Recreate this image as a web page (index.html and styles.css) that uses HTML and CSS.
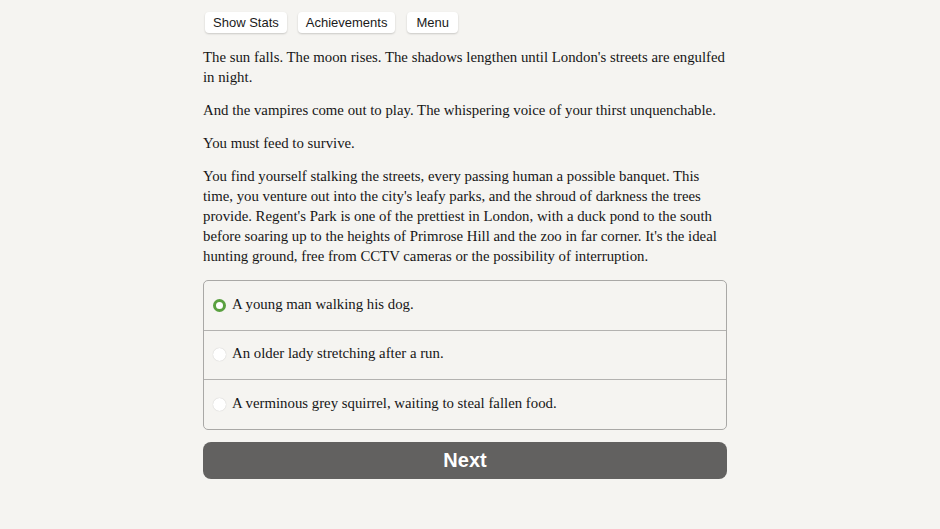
FILE: index.html
```html
<!DOCTYPE html>
<html lang="en">
<head>
  <meta charset="UTF-8">
  <meta name="viewport" content="width=device-width, initial-scale=1.0">
  <title>Regent's Park</title>
  <link rel="stylesheet" href="styles.css">
</head>
<body>
  <div class="container">
    <div class="buttons">
      <button class="spacedLink">Show Stats</button>
      <button class="spacedLink">Achievements</button>
      <button class="spacedLink">Menu</button>
    </div>

    <div class="text">
      <p>The sun falls. The moon rises. The shadows lengthen until London's streets are engulfed in night.</p>
      <p>And the vampires come out to play. The whispering voice of your thirst unquenchable.</p>
      <p>You must feed to survive.</p>
      <p>You find yourself stalking the streets, every passing human a possible banquet. This time, you venture out into the city's leafy parks, and the shroud of darkness the trees provide. Regent's Park is one of the prettiest in London, with a duck pond to the south before soaring up to the heights of Primrose Hill and the zoo in far corner. It's the ideal hunting ground, free from CCTV cameras or the possibility of interruption.</p>
    </div>

    <form class="choice">
      <label class="option">
        <input type="radio" name="choice" checked>
        <span class="radio"></span>
        A young man walking his dog.
      </label>
      <label class="option">
        <input type="radio" name="choice">
        <span class="radio"></span>
        An older lady stretching after a run.
      </label>
      <label class="option">
        <input type="radio" name="choice">
        <span class="radio"></span>
        A verminous grey squirrel, waiting to steal fallen food.
      </label>
    </form>

    <button class="next">Next</button>
  </div>
</body>
</html>
```

FILE: styles.css
```css
* {margin: 0; padding: 0; box-sizing: border-box;}

html, body {
  height: 100%;
}
body {
  background-color: #f5f4f1;
  color: #161616;
  font-family: "Liberation Serif", "Times New Roman", serif;
  padding-right: 10px;
}
.container {
  width: 524px;
  margin: 0 auto;
  padding-top: 12px;
}

/* top bar */
.buttons {
  display: flex;
  gap: 11px;
  padding-left: 2px;
}
.spacedLink {
  font-family: "Liberation Sans", Arial, sans-serif;
  font-size: 13px;
  color: #1a1a1a;
  background-color: #fff;
  border: none;
  border-radius: 4px;
  padding: 0 8px;
  height: 21px;
  line-height: 21px;
  box-shadow: 0 1px 2px rgba(0, 0, 0, 0.18);
}
.spacedLink:last-child {
  padding: 0 9px;
  margin-left: 1px;
}

/* story text */
.text {
  padding-top: 14px;
  font-size: 14.8px;
  line-height: 20px;
}
.text p {
  margin-bottom: 13px;
}

/* choices */
.choice {
  margin-top: 14px;
  border: 1px solid #a9a8a6;
  border-radius: 5px;
  overflow: hidden;
}
.option {
  display: flex;
  align-items: center;
  height: 49.5px;
  padding-left: 9px;
  padding-bottom: 2px;
  font-size: 14.8px;
  border-bottom: 1px solid #b3b2b0;
}
.option:last-child {
  height: 48.5px;
  border-bottom: none;
}
.option input {
  display: none;
}
.radio {
  width: 13px;
  height: 13px;
  border-radius: 50%;
  background-color: #fff;
  box-shadow: 0 0 1px rgba(0, 0, 0, 0.25);
  margin-right: 6px;
  margin-top: 2px;
  flex-shrink: 0;
}
.option input:checked + .radio {
  background-color: #fff;
  border: 3.5px solid #5aa040;
  box-shadow: none;
}

.next {
  display: block;
  width: 100%;
  height: 37px;
  margin-top: 12px;
  border: none;
  border-radius: 8px;
  background-color: #626160;
  color: #fff;
  font-family: "Liberation Sans", Arial, sans-serif;
  font-weight: bold;
  font-size: 20px;
}
```
